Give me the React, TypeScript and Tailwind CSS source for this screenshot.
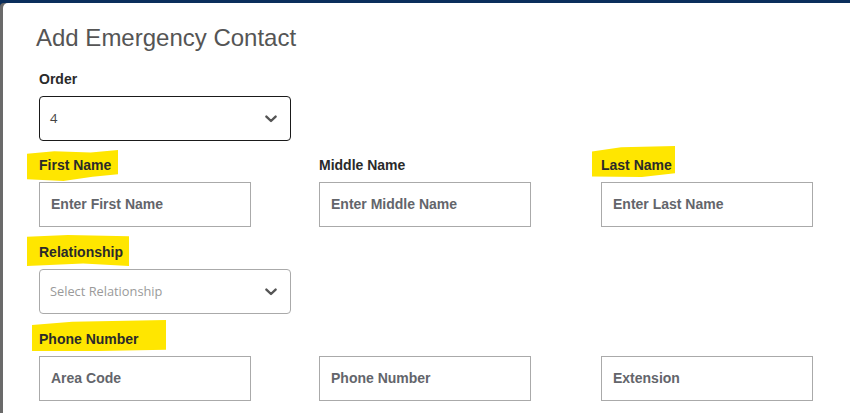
import React from "react";

const Chevron = () => (
  <svg width="12" height="8" viewBox="0 0 12 8" className="shrink-0">
    <path d="M1.4 1.6 L6 6 L10.6 1.6" fill="none" stroke="#555" strokeWidth="2.4" strokeLinecap="round" strokeLinejoin="round" />
  </svg>
);

const labelCls = "relative z-10 block h-[16px] leading-[16px] text-[14px] font-bold text-[#2a2a2a]";
const inputCls =
  "flex items-center h-[45px] w-[212px] border border-[#aaaaaa] bg-white pl-[11px] text-[14px] font-bold text-[#63656b]";

export default function App() {
  return (
    <div
      className="w-[850px] h-[413px] overflow-hidden bg-[#0b2e5c] pt-[3px]"
      style={{ fontFamily: '"Liberation Sans", Arial, sans-serif' }}
    >
      <div className="flex h-full bg-[#6a6a6a] rounded-tl-[4px]">
        <div className="ml-[3px] flex-1 bg-white rounded-tl-[5px] pt-[21px]">
          <h1 className="pl-[33px] text-[24px] leading-[28px] font-normal text-[#555555]">
            Add Emergency Contact
          </h1>
          <div className="pl-[36px] pt-[19px]">
            {/* Order */}
            <span className={labelCls}>Order</span>
            <div className="mt-[9px] flex items-center justify-between h-[45px] w-[252px] rounded-[4px] border border-[#1a1a1a] pl-[10px] pr-[13px]">
              <span className="text-[13px] text-[#444]" style={{ fontFamily: '"Open Sans", sans-serif' }}>4</span>
              <Chevron />
            </div>

            {/* Names */}
            <div className="mt-[16px] flex">
              <div className="w-[280px]">
                <div className="relative">
                  <span className="absolute left-[-12px] top-[-7px] h-[31px] w-[91px] bg-[#ffe600] [clip-path:polygon(0%_12%,30%_4%,70%_8%,100%_0%,100%_78%,72%_86%,40%_100%,0%_94%)]" />
                  <span className={labelCls}>First Name</span>
                </div>
                <div className={`mt-[9px] ${inputCls}`}>Enter First Name</div>
              </div>
              <div className="w-[282px]">
                <span className={labelCls}>Middle Name</span>
                <div className={`mt-[9px] ${inputCls}`}>Enter Middle Name</div>
              </div>
              <div className="w-[230px]">
                <div className="relative">
                  <span className="absolute left-[-9px] top-[-11px] h-[31px] w-[83px] bg-[#ffe600] [clip-path:polygon(0%_18%,35%_4%,100%_0%,100%_88%,60%_100%,0%_98%)]" />
                  <span className={labelCls}>Last Name</span>
                </div>
                <div className={`mt-[9px] ${inputCls}`}>Enter Last Name</div>
              </div>
            </div>

            {/* Relationship */}
            <div className="mt-[17px]">
              <div className="relative">
                <span className="absolute left-[-12px] top-[-9px] h-[31px] w-[102px] bg-[#ffe600] [clip-path:polygon(0%_6%,40%_0%,100%_4%,100%_100%,55%_92%,0%_100%)]" />
                <span className={labelCls}>Relationship</span>
              </div>
              <div className="mt-[9px] flex items-center justify-between h-[45px] w-[252px] rounded-[4px] border border-[#aaaaaa] pl-[10px] pr-[13px]">
                <span className="text-[12.8px] text-[#9a9a9a]" style={{ fontFamily: '"Open Sans", sans-serif' }}>
                  Select Relationship
                </span>
                <Chevron />
              </div>
            </div>

            {/* Phone */}
            <div className="mt-[17px] flex">
              <div className="w-[280px]">
                <div className="relative">
                  <span className="absolute left-[-7px] top-[-11px] h-[31px] w-[134px] bg-[#ffe600] [clip-path:polygon(0%_16%,30%_6%,100%_0%,100%_96%,50%_100%,0%_100%)]" />
                  <span className={labelCls}>Phone Number</span>
                </div>
                <div className={`mt-[9px] ${inputCls}`}>Area Code</div>
              </div>
              <div className="w-[282px] pt-[25px]">
                <div className={inputCls}>Phone Number</div>
              </div>
              <div className="w-[230px] pt-[25px]">
                <div className={inputCls}>Extension</div>
              </div>
            </div>
          </div>
        </div>
      </div>
    </div>
  );
}
